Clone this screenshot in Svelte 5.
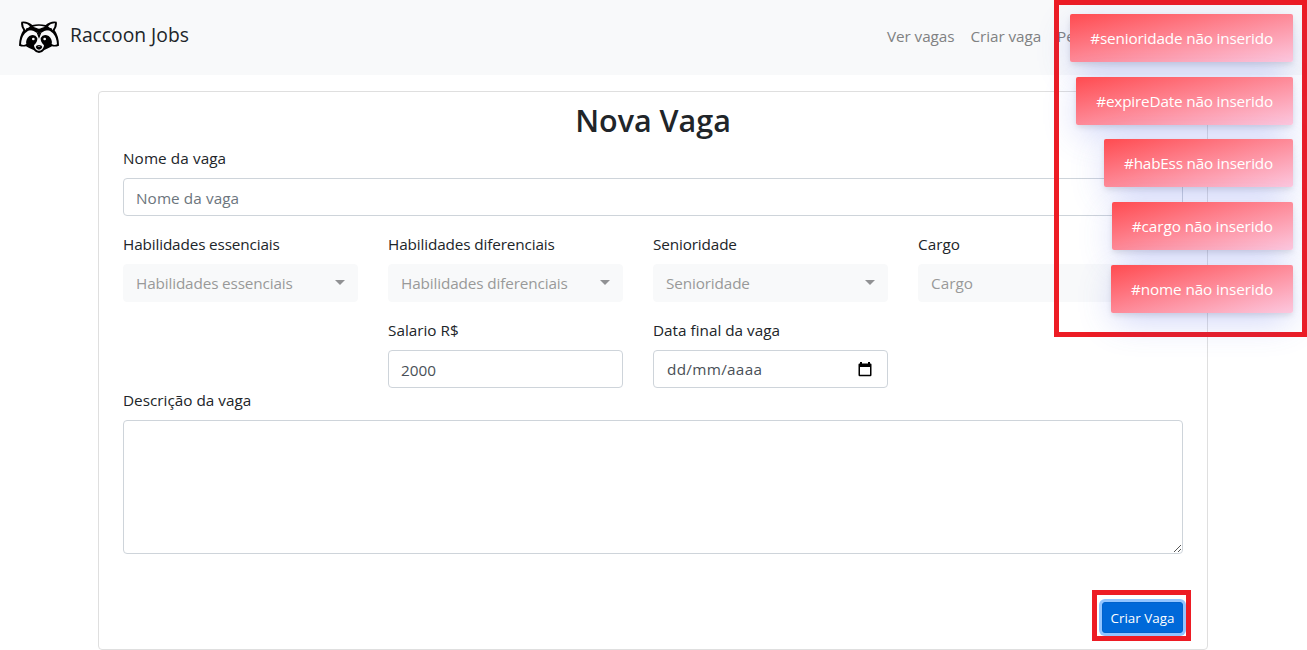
<script>
  const toasts = [
    { field: 'senioridade', spacing: -0.17 },
    { field: 'expireDate', spacing: -0.175 },
    { field: 'habEss', spacing: -0.2 },
    { field: 'cargo', spacing: -0.05 },
    { field: 'nome', spacing: -0.11 }
  ];
  const selects = [
    { name: 'Habilidades essenciais', spacing: -0.14 },
    { name: 'Habilidades diferenciais', spacing: -0.13 },
    { name: 'Senioridade', spacing: -0.14 },
    { name: 'Cargo', spacing: 0 }
  ];
</script>

<div class="page">
  <nav>
    <a class="brand" href="#home">
      <svg class="logo" viewBox="27 33 120 96" aria-hidden="true">
        <path d="M34 35Q52 32 67 45Q86 41 107 45Q121 32 140 35Q143 49 134 61Q147 79 147 107Q137 111 126 109Q113 116 103 120Q96 129 87 129Q78 129 71 120Q59 116 48 109Q37 111 27 107Q28 78 40 61Q31 49 34 35Z" />
        <g fill="#f8f9fa">
          <path d="M39 40Q51 39 60 49L47 61Q39 51 39 40ZM135 40Q123 39 114 49L127 61Q135 51 135 40Z" />
          <path d="M69 50Q87 44 105 50L94 54Q87 59 80 54Z" />
          <path d="M83 67Q62 51 45 70Q34 83 33 103Q41 107 49 102Q46 88 58 78Q74 69 82 84Q83 96 72 106Q72 113 77 118Q87 127 97 118Q102 113 102 106Q91 96 92 84Q100 69 116 78Q128 88 125 102Q133 107 141 103Q140 83 129 70Q112 51 91 67L87 80Z" />
          <circle cx="70" cy="87" r="4" /><circle cx="104" cy="87" r="4" />
        </g>
        <path d="M49 55Q62 49 80 61L87 75L94 61Q112 49 125 55L128 62Q109 56 94 68L87 86L80 68Q65 56 46 62ZM77 111Q78 105 87 105Q96 105 97 111Q94 119 87 119Q80 119 77 111Z" />
        <path d="M83 108H91L90 110H84Z" fill="#aaa" />
      </svg>
      <span>Raccoon Jobs</span>
    </a>
    <div class="links">
      <a href="#vagas">Ver vagas</a>
      <a href="#criar">Criar vaga</a>
      <a href="#pe">Pe</a>
    </div>
  </nav>

  <main>
    <h2>Nova Vaga</h2>
    <label for="nome">Nome da vaga</label>
    <div class="control" id="nome"><span class="placeholder">Nome da vaga</span></div>

    <div class="grid selects">
      {#each selects as { name, spacing }}
        <div style:letter-spacing="{spacing}px">
          <div class="label">{name}</div>
          <div class="control select">
            <span>{name}</span>
            <i class="caret"></i>
          </div>
        </div>
      {/each}
    </div>

    <div class="grid second">
      <div class="salary">
        <div class="label">Salario R$</div>
        <div class="control"><span>2000</span></div>
      </div>
      <div>
        <div class="label">Data final da vaga</div>
        <div class="control date">
          <span>dd/mm/aaaa</span>
          <svg width="14" height="15" viewBox="0 0 14 15" aria-hidden="true">
            <path d="M2 0H4V1.5H10V0H12V1.5H12.5Q13.5 1.5 13.5 2.5V13Q13.5 14.3 12.3 14.3H1.7Q.5 14.3 .5 13V2.5Q.5 1.5 1.5 1.5H2ZM2 5V12.8H12V5Z" fill-rule="evenodd" />
          </svg>
        </div>
      </div>
    </div>

    <div class="label desc">Descrição da vaga</div>
    <div class="area">
      <svg width="9" height="9" viewBox="0 0 9 9" aria-hidden="true">
        <path d="M1 8L8 1M5 8L8 5" fill="none" stroke="#555" stroke-width="1" />
      </svg>
    </div>

    <div class="actions"><div class="mark"><button>Criar Vaga</button></div></div>
  </main>

  <aside>
    {#each toasts as { field, spacing }}
      <div class="toast" style:letter-spacing="{spacing}px">#{field} não inserido</div>
    {/each}
  </aside>
</div>

<style>
  :global(body) { margin: 0; background: #fff; overflow: hidden; }
  * { box-sizing: border-box; }
  .page {
    position: relative;
    width: 1307px;
    height: 650px;
    overflow: hidden;
    font-family: "Open Sans", "Noto Sans", sans-serif;
    font-size: 15.3px;
    line-height: 24px;
    color: #212529;
  }
  nav {
    height: 75px;
    background: #f8f9fa;
    display: flex;
    justify-content: space-between;
    padding: 21px 16px 0 19px;
  }
  a { text-decoration: none; color: inherit; }
  .brand { display: flex; gap: 11px; height: 32px; font-size: 19.3px; }
  .brand span { line-height: 28px; }
  .logo { width: 40px; height: 32px; }
  .links { display: flex; gap: 16px; width: 404px; padding-top: 3px; color: #808182; letter-spacing: -.08px; }
  main {
    width: 1110px;
    height: 559px;
    margin: 16px 0 0 98px;
    border: 1px solid #dfdfdf;
    border-radius: 4px;
    padding: 9px 24px 0;
  }
  h2 {
    margin: 0 0 7px;
    font-size: 30.5px;
    line-height: 38px;
    font-weight: 600;
    text-align: center;
  }
  label, .label { display: block; margin-bottom: 8px; height: 24px; }
  label, .placeholder { letter-spacing: .08px; }
  .control {
    height: 38px;
    border: 1px solid #ced4da;
    border-radius: 4px;
    padding: 1px 12px 0;
    display: flex;
    align-items: center;
    color: #495057;
  }
  .control .placeholder { color: #6c757d; }
  .grid { display: grid; grid-template-columns: repeat(4, 235px); gap: 30px; }
  .selects { margin-top: 16px; }
  .select { background: #f8f9fa; border-color: #f8f9fa; justify-content: space-between; color: #999; padding-top: 0; }
  .caret { border: 5px solid transparent; border-top-color: #909193; border-bottom: 0; margin-top: -2px; }
  .second { margin-top: 16px; }
  .salary { grid-column: 2; }
  .date { justify-content: space-between; padding: 0 15px 0 13px; }
  .date span { letter-spacing: .3px; }
  .desc { margin-bottom: 8px; }
  .area {
    height: 134px;
    border: 1px solid #ced4da;
    border-radius: 4px;
    display: flex;
    justify-content: flex-end;
    align-items: flex-end;
  }
  .actions { display: flex; justify-content: flex-end; margin: 36px -8px 0 0; }
  .mark { width: 99px; height: 51px; border: 5px solid #ed1c24; padding: 7px 3px 5px 5px; }
  button {
    display: block;
    width: 81px;
    height: 31px;
    padding: 1px 0 0;
    border: 1px solid #0062cc;
    border-radius: 3px;
    background: #0069d9;
    color: #fff;
    box-shadow: 0 0 0 3px #92c5ff;
    font: 13.4px/21px "Open Sans", "Noto Sans", sans-serif;
  }
  aside {
    position: absolute;
    top: 0;
    right: 0;
    width: 253px;
    height: 337px;
    border: 5px solid #ed1c24;
    padding: 9px 9px 0 0;
    display: flex;
    flex-direction: column;
    align-items: flex-end;
    gap: 14.67px;
  }
  .toast {
    flex: none;
    height: 48px;
    padding: 12px 20px;
    border-radius: 2px;
    color: #fff;
    white-space: nowrap;
    background: linear-gradient(to bottom right, #ff4b50, #fcc8df);
    box-shadow: 0 3px 6px -1px rgba(0, 0, 0, .12), 0 10px 36px -4px rgba(77, 96, 232, .3);
  }
</style>
